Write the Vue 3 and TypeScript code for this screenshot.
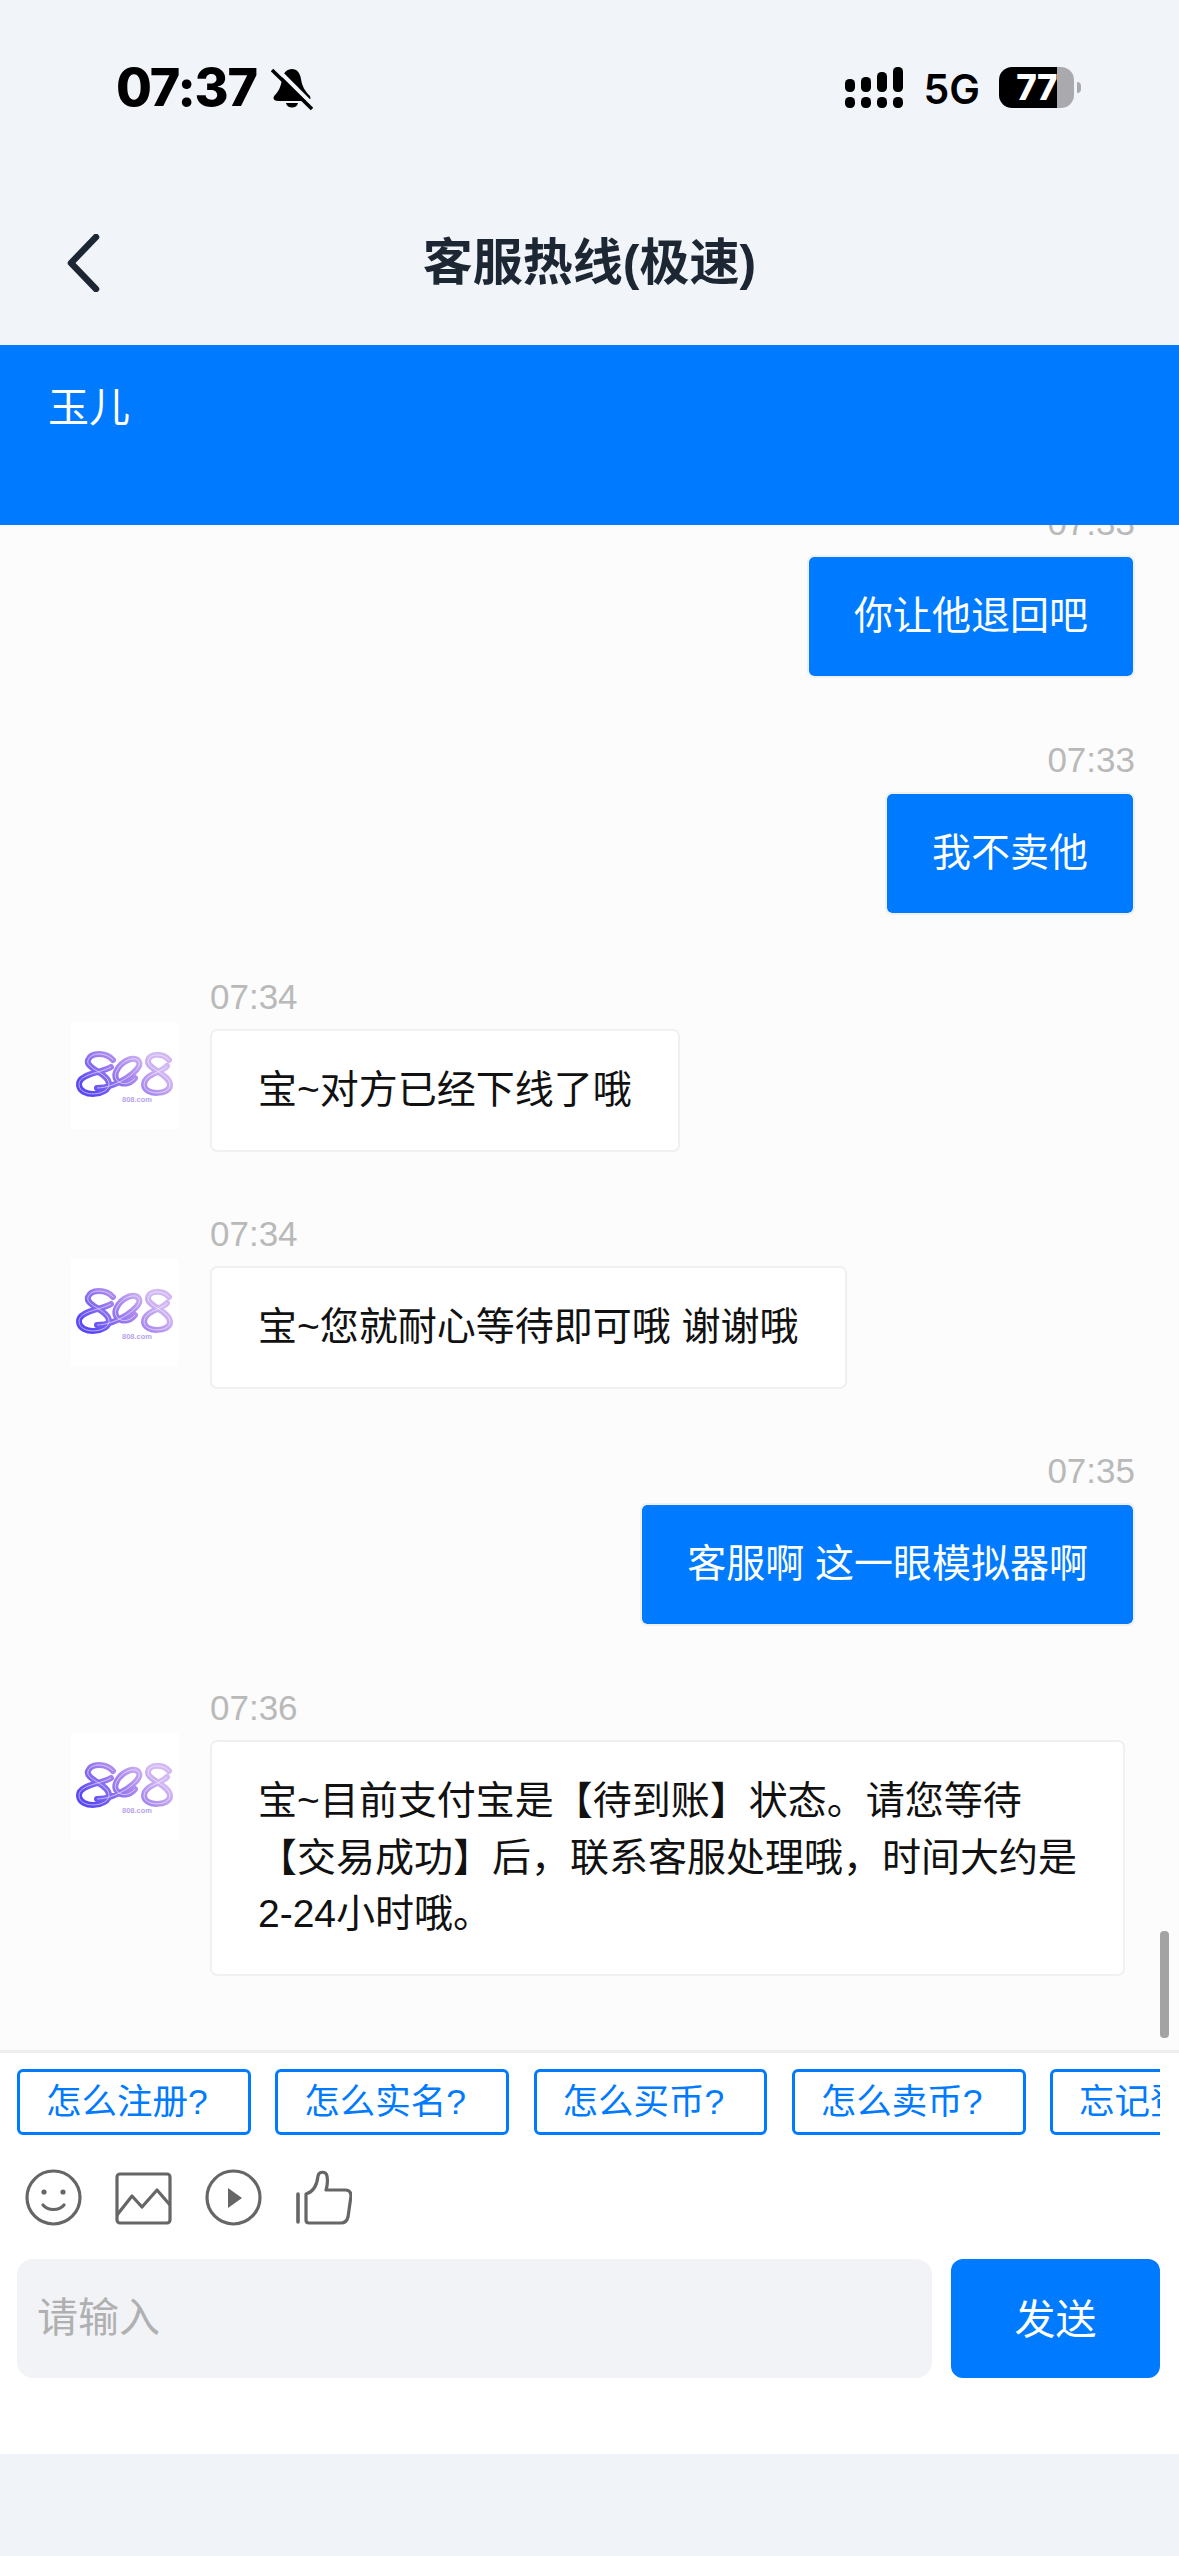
<script setup lang="ts">
interface Message {
  id: number;
  time: string;
  text: string;
  mine: boolean;
}

const messages: Message[] = [
  { id: 1, time: '07:33', text: '你让他退回吧', mine: true },
  { id: 2, time: '07:33', text: '我不卖他', mine: true },
  { id: 3, time: '07:34', text: '宝~对方已经下线了哦', mine: false },
  { id: 4, time: '07:34', text: '宝~您就耐心等待即可哦 谢谢哦', mine: false },
  { id: 5, time: '07:35', text: '客服啊 这一眼模拟器啊', mine: true },
  { id: 6, time: '07:36', text: '宝~目前支付宝是【待到账】状态。请您等待【交易成功】后，联系客服处理哦，时间大约是2-24小时哦。', mine: false },
];

const quickQuestions = ['怎么注册?', '怎么实名?', '怎么买币?', '怎么卖币?', '忘记登录密码?'];
</script>

<template>
  <div class="page">
    <header class="top">
      <div class="status">
        <span class="clock">07:37</span>
        <svg class="bell" viewBox="0 0 42 44" width="42" height="44">
          <path d="M21 2C26 2 29 6 30 12C31 19 34 24 38 28C41 31 39 34 35 34H7C3 34 1 31 4 28C8 24 10 19 11 12C12 6 16 2 21 2Z" fill="#000" />
          <path d="M15 36H27C26 42 16 42 15 36Z" fill="#000" />
          <path d="M5 1L42 38" stroke="#f1f5fa" stroke-width="4" />
          <path d="M1 3L41 42" stroke="#000" stroke-width="3.5" />
        </svg>
        <div class="status-right">
          <svg class="signal" viewBox="0 0 58 41" width="58" height="41">
            <rect x="0" y="30" width="10" height="11" rx="4.5" />
            <rect x="16" y="30" width="10" height="11" rx="4.5" />
            <rect x="32" y="30" width="10" height="11" rx="4.5" />
            <rect x="48" y="30" width="10" height="11" rx="4.5" />
            <rect x="0" y="12" width="10" height="13" rx="4.5" />
            <rect x="16" y="10" width="10" height="15" rx="4.5" />
            <rect x="32" y="5" width="10" height="20" rx="4.5" />
            <rect x="48" y="0" width="10" height="25" rx="4.5" />
          </svg>
          <span class="network">5G</span>
          <div class="battery">
            <div class="battery-level">77</div>
            <div class="battery-rest"></div>
          </div>
          <div class="battery-nub"></div>
        </div>
      </div>
      <nav class="nav">
        <svg class="back" viewBox="0 0 34 58" width="34" height="58">
          <path d="M30 3L5 29L30 55" fill="none" stroke="#1c2733" stroke-width="6.5" stroke-linecap="round" stroke-linejoin="round" />
        </svg>
        <h1 class="title">客服热线(极速)</h1>
        <span></span>
      </nav>
    </header>

    <div class="agent">玉儿</div>

    <main class="chat">
      <div class="list">
        <div v-for="msg in messages" :key="msg.id" class="row" :class="{ mine: msg.mine }">
          <div v-if="!msg.mine" class="avatar">
            <svg viewBox="0 0 107 107" width="107" height="107">
              <defs>
                <linearGradient id="logo-grad" gradientUnits="userSpaceOnUse" x1="72" y1="30" x2="28" y2="78">
                  <stop offset="0" stop-color="#d3b9f4" />
                  <stop offset="0.45" stop-color="#a583ef" />
                  <stop offset="1" stop-color="#5a49f3" />
                </linearGradient>
              </defs>
              <g fill="none" stroke="url(#logo-grad)" stroke-width="6" stroke-linecap="round">
                <path d="M42 38C35 30 20 30 17 38C14 47 38 51 38 62C38 74 9 76 8 63C7 52 30 51 40 45" />
                <path d="M26 66C45 66 72 48 68 40C65 33 50 38 45 50C41 60 55 67 64 56" />
                <path d="M98 38C92 31 78 31 77 39C76 47 99 52 99 63C99 73 74 74 73 63C73 52 90 51 96 44" />
              </g>
              <g fill="none" stroke="#fff" stroke-width="0.8" stroke-opacity="0.7">
                <path d="M42 38C35 30 20 30 17 38C14 47 38 51 38 62C38 74 9 76 8 63C7 52 30 51 40 45" />
                <path d="M26 66C45 66 72 48 68 40C65 33 50 38 45 50C41 60 55 67 64 56" />
                <path d="M98 38C92 31 78 31 77 39C76 47 99 52 99 63C99 73 74 74 73 63C73 52 90 51 96 44" />
              </g>
              <text x="66" y="80" text-anchor="middle" class="logo-text">808.com</text>
            </svg>
          </div>
          <div class="body">
            <div class="time">{{ msg.time }}</div>
            <div class="bubble">{{ msg.text }}</div>
          </div>
        </div>
      </div>
      <div class="scrollbar"></div>
    </main>

    <footer class="composer">
      <div class="chips">
        <button v-for="q in quickQuestions" :key="q" class="chip">{{ q }}</button>
      </div>
      <div class="tools">
        <svg viewBox="0 0 57 57" width="57" height="57" fill="none" stroke="#666" stroke-width="3.2">
          <circle cx="28.5" cy="28.5" r="26.5" />
          <circle cx="19" cy="23" r="2.6" fill="#666" stroke="none" />
          <circle cx="38" cy="23" r="2.6" fill="#666" stroke="none" />
          <path d="M18 36C23 42 34 42 39 36" stroke-linecap="round" />
        </svg>
        <svg viewBox="0 0 57 57" width="57" height="57" fill="none" stroke="#666" stroke-width="3.2">
          <rect x="2" y="5" width="53" height="49" rx="3" />
          <path d="M2 46L17 27L27 38L42 21L55 36" stroke-linejoin="round" />
        </svg>
        <svg viewBox="0 0 57 57" width="57" height="57" fill="none" stroke="#666" stroke-width="3.2">
          <circle cx="28.5" cy="28.5" r="26.5" />
          <path d="M23 19L37 29L23 39Z" fill="#666" stroke="none" />
        </svg>
        <svg viewBox="0 0 57 57" width="57" height="57" fill="none" stroke="#666" stroke-width="3.2">
          <path d="M3 25V53" stroke-width="3.6" stroke-linecap="round" />
          <path d="M11 25C18 23 22 16 23 7C24 2 31 2 32 7C33 13 32 18 31 21H50C54 21 56 23 56 27L53 48C52 52 50 54 46 54H14C12 54 11 53 11 51Z" stroke-linejoin="round" />
        </svg>
      </div>
      <div class="input-row">
        <input class="input" type="text" placeholder="请输入" />
        <button class="send">发送</button>
      </div>
    </footer>
  </div>
</template>

<style scoped>
.page {
  width: 1179px;
  height: 2556px;
  display: flex;
  flex-direction: column;
  overflow: hidden;
  background: #f0f3f8;
  font-family: "Liberation Sans", "Noto Sans CJK SC", sans-serif;
}

.top {
  background: #f1f5fa;
  height: 345px;
  flex-shrink: 0;
}

.status {
  height: 181px;
  box-sizing: border-box;
  padding: 67px 98px 0 116px;
  display: flex;
  align-items: flex-start;
}

.clock {
  font-family: Inter, sans-serif;
  font-weight: 800;
  font-size: 52px;
  line-height: 41px;
  letter-spacing: -1.2px;
  color: #000;
}

.bell {
  margin-left: 14px;
}

.status-right {
  margin-left: auto;
  display: flex;
  align-items: flex-start;
}

.signal {
  fill: #000;
}

.network {
  margin-left: 21px;
  font-family: Inter, sans-serif;
  font-weight: 600;
  font-size: 41px;
  line-height: 41px;
  margin-top: 2px;
  color: #000;
}

.battery {
  margin-left: 19px;
  width: 75px;
  height: 41px;
  display: flex;
  border-radius: 13px;
  overflow: hidden;
}

.battery-level {
  width: 58px;
  background: #000;
  color: #fff;
  font-family: Inter, sans-serif;
  font-weight: 800;
  font-size: 35px;
  line-height: 41px;
  text-align: right;
  letter-spacing: -0.5px;
  overflow: hidden;
}

.battery-rest {
  flex: 1;
  background: #a9a9ae;
}

.battery-nub {
  width: 4px;
  height: 11px;
  margin: 15px 0 0 3px;
  background: #a9a9ae;
  border-radius: 0 4px 4px 0;
}

.nav {
  height: 164px;
  padding: 0 66px;
  display: grid;
  grid-template-columns: 1fr auto 1fr;
  align-items: center;
}

.title {
  margin: 0;
  font-size: 50px;
  line-height: 60px;
  font-weight: 700;
  color: #1c2733;
}

.agent {
  height: 180px;
  flex-shrink: 0;
  box-sizing: border-box;
  padding: 35px 0 0 48px;
  background: #007aff;
  color: #fff;
  font-size: 41px;
  line-height: 56px;
}

.chat {
  position: relative;
  height: 1525px;
  flex-shrink: 0;
  overflow: hidden;
  background: #fcfcfc;
}

.list {
  margin-top: -22px;
  padding: 0 44px 0 71px;
  display: flex;
  flex-direction: column;
  gap: 62.5px;
}

.row {
  display: flex;
  align-items: flex-start;
  gap: 32px;
}

.row.mine {
  justify-content: flex-end;
}

.avatar {
  width: 107px;
  height: 107px;
  margin-top: 45px;
  background: #fff;
  flex-shrink: 0;
}

.avatar svg {
  display: block;
}

.logo-text {
  font-family: "Liberation Sans", sans-serif;
  font-size: 7.5px;
  font-weight: 700;
  fill: #b9a3ee;
}

.body {
  min-width: 0;
  display: flex;
  flex-direction: column;
  gap: 12px;
  align-items: flex-start;
  max-width: 915px;
}

.mine .body {
  align-items: flex-end;
}

.time {
  font-size: 35px;
  line-height: 40px;
  color: #b9b9b9;
}

.bubble {
  box-sizing: border-box;
  padding: 31px 46px;
  border: 2px solid #f0f0f0;
  border-radius: 7px;
  background: #fff;
  color: #111;
  font-size: 39px;
  line-height: 56.5px;
}

.mine .bubble {
  padding: 31px 45px;
  background: #007aff;
  background-clip: padding-box;
  color: #fff;
}

.scrollbar {
  position: absolute;
  left: 1160px;
  top: 1406px;
  width: 9px;
  height: 107px;
  border-radius: 4px;
  background: #a3a3a3;
}

.composer {
  height: 404px;
  flex-shrink: 0;
  box-sizing: border-box;
  border-top: 3px solid #eeeeee;
  padding: 16px 19px 0 17px;
  background: #fff;
  display: flex;
  flex-direction: column;
}

.chips {
  display: flex;
  gap: 24.5px;
  overflow: hidden;
  flex-shrink: 0;
}

.chip {
  flex-shrink: 0;
  height: 66px;
  box-sizing: border-box;
  padding: 0 40px 0 26px;
  border: 3px solid #007aff;
  border-radius: 6px;
  background: #fff;
  color: #007aff;
  font-family: inherit;
  font-size: 35.5px;
  line-height: 56px;
}

.tools {
  display: flex;
  gap: 33px;
  padding-left: 8px;
  margin-top: 34px;
}

.tools svg {
  display: block;
}

.input-row {
  display: flex;
  gap: 19px;
  margin-top: 33px;
}

.input {
  flex: 1;
  min-width: 0;
  height: 119px;
  box-sizing: border-box;
  padding: 0 20px;
  border: none;
  outline: none;
  border-radius: 16px;
  background: #f2f3f7;
  font-family: inherit;
  font-size: 41px;
}

.input::placeholder {
  color: #b0b0b0;
}

.send {
  width: 209px;
  height: 119px;
  padding: 0 0 5px;
  border: none;
  border-radius: 12px;
  background: #007aff;
  color: #fff;
  font-family: inherit;
  font-size: 41px;
}
</style>
